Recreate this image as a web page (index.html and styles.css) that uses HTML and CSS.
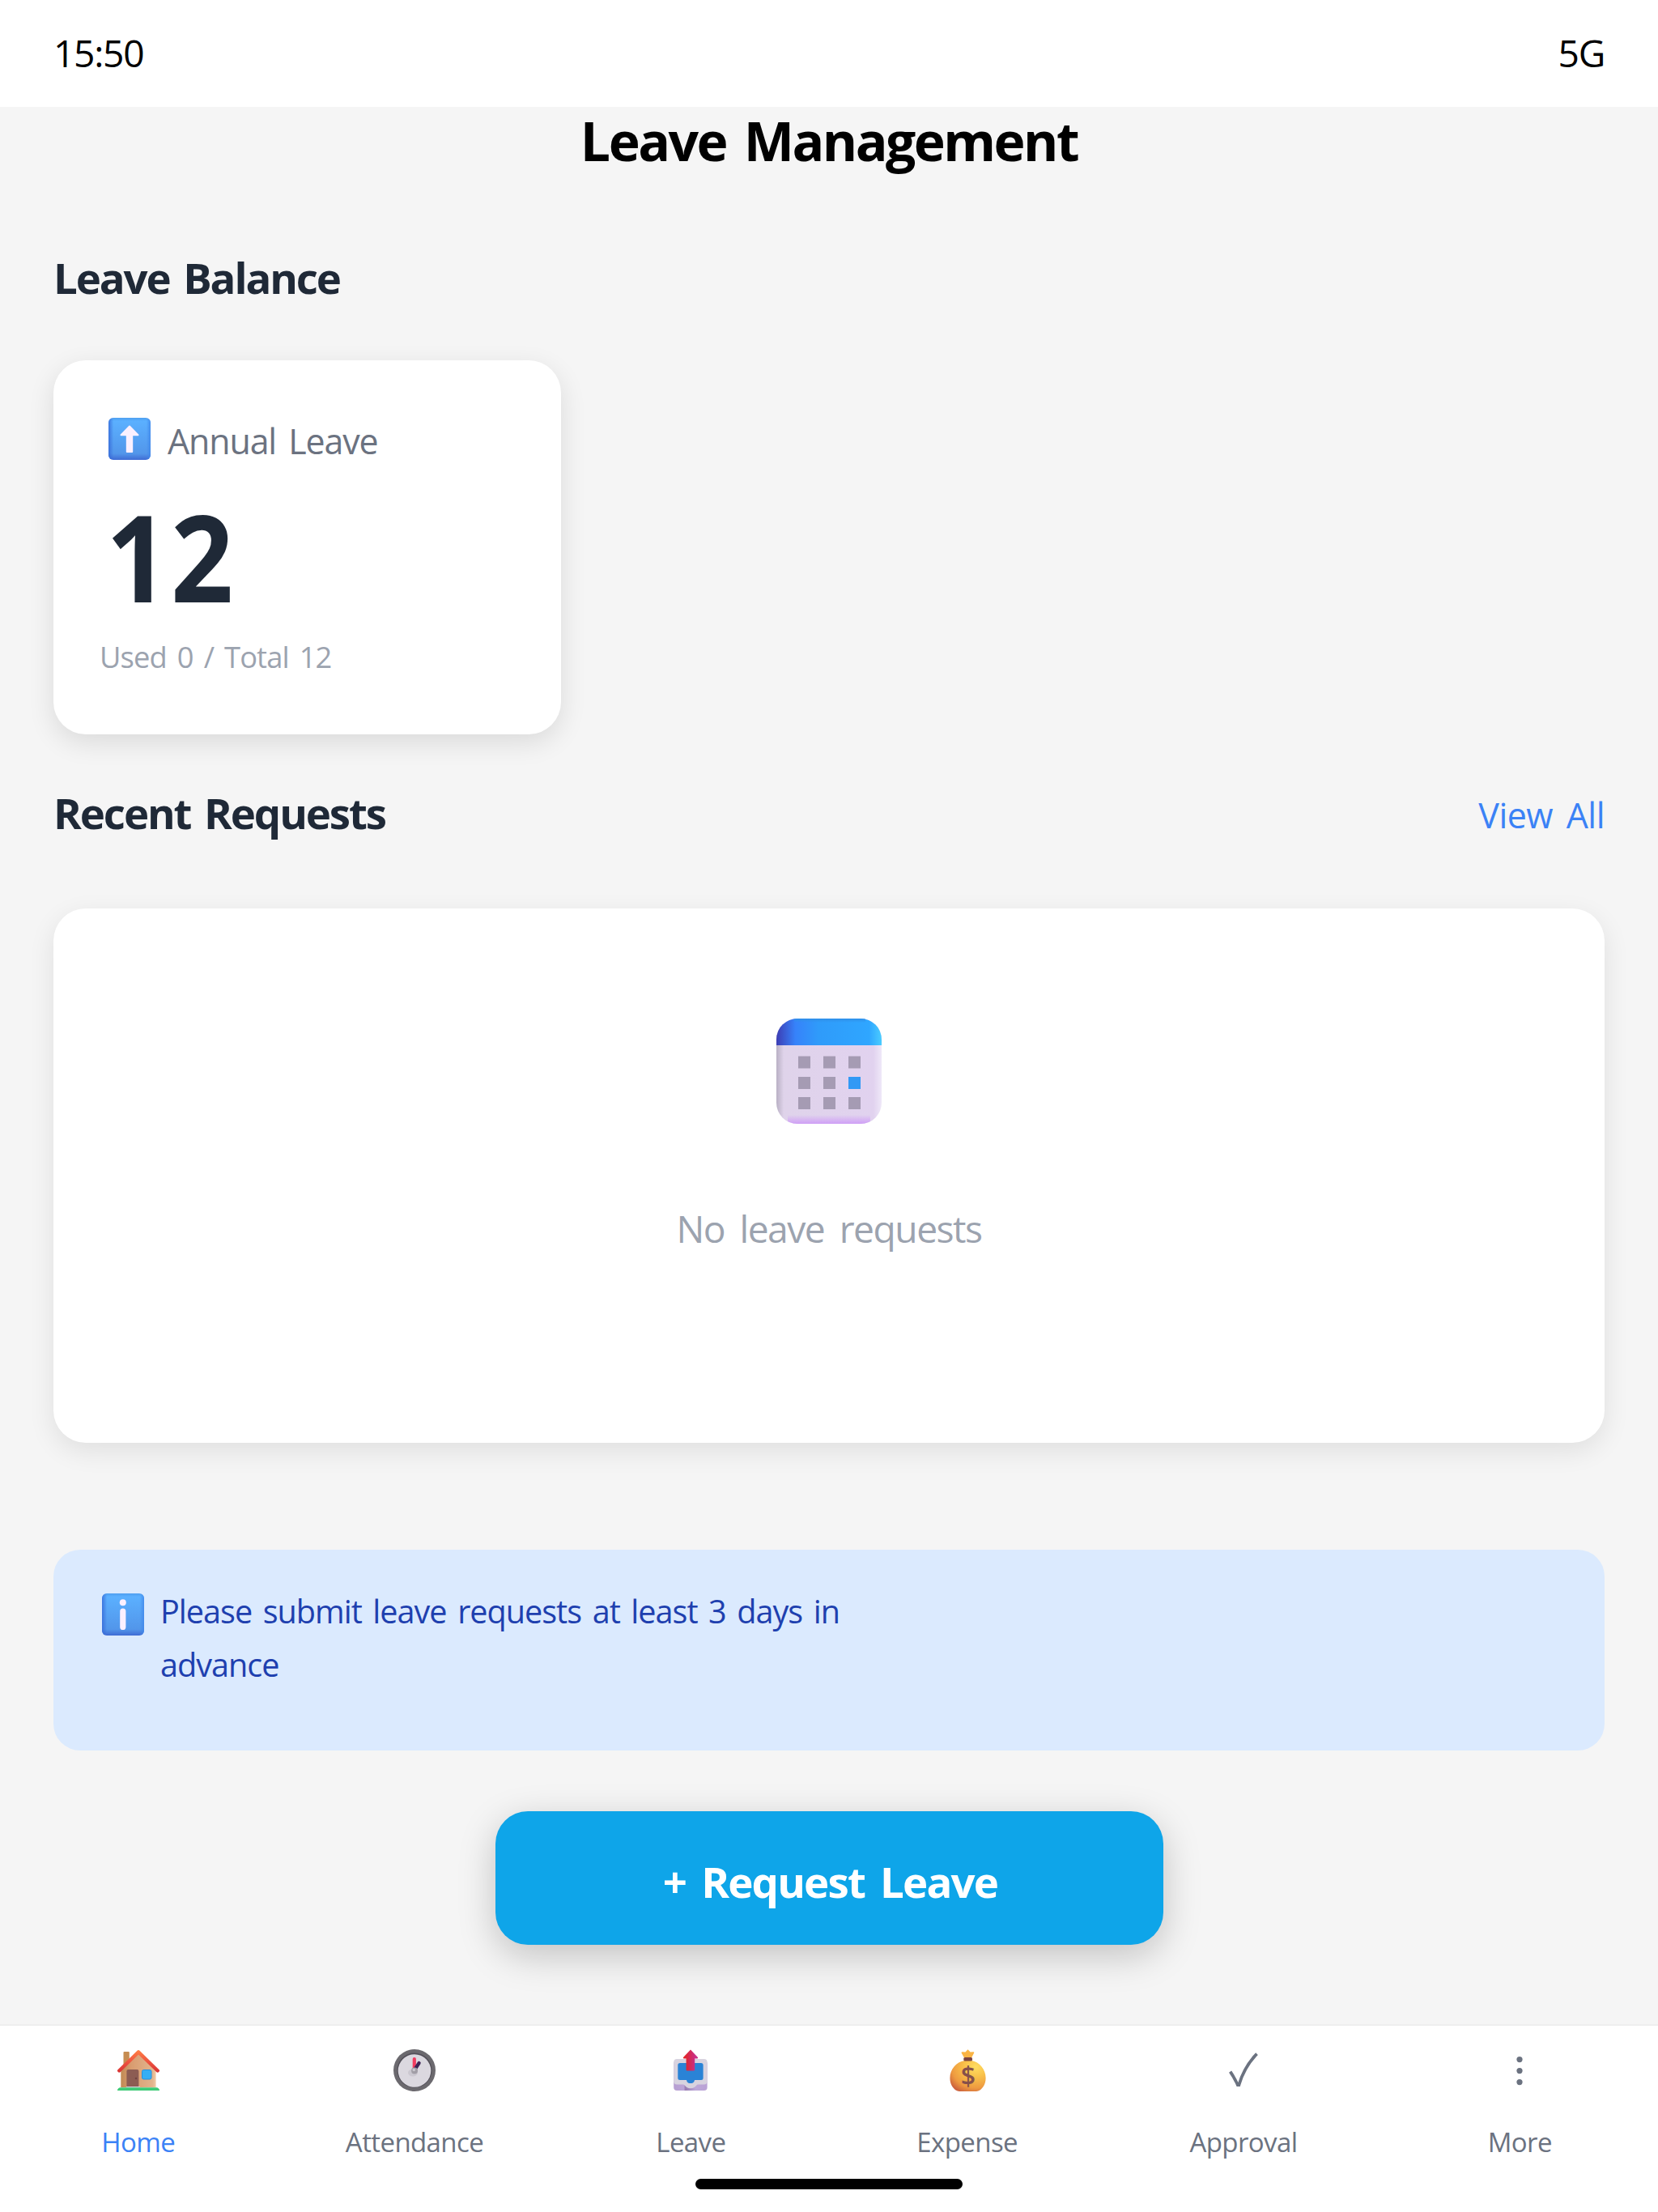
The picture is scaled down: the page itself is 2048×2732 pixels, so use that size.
FILE: index.html
```
<!DOCTYPE html>
<html lang="en">
<head>
    <meta charset="UTF-8">
    <meta name="viewport" content="width=device-width, initial-scale=1.0">
    <title>Leave Management</title>
    <link rel="stylesheet" href="styles.css">
</head>
<body>
    <div class="status-bar">
        <span>15:50</span>
        <span>5G</span>
    </div>

    <main class="content">
        <h1 class="page-title">Leave Management</h1>

        <div class="section-header">
            <h2>Leave Balance</h2>
        </div>
        <div class="card balance-card">
            <div class="balance-type">
                <svg class="icon" viewBox="0 0 52 52">
                    <defs>
                        <linearGradient id="tile" x1="0" y1="0" x2="0" y2="1">
                            <stop offset="0" stop-color="#4e9ff0"/>
                            <stop offset="0.08" stop-color="#5bb0ff"/>
                            <stop offset="0.85" stop-color="#5296ea"/>
                            <stop offset="1" stop-color="#3f6bd4"/>
                        </linearGradient>
                        <linearGradient id="tileSide" x1="0" y1="0" x2="1" y2="0">
                            <stop offset="0" stop-color="#3568d8" stop-opacity="0.8"/>
                            <stop offset="0.12" stop-color="#3568d8" stop-opacity="0"/>
                            <stop offset="0.9" stop-color="#3f86ea" stop-opacity="0"/>
                            <stop offset="1" stop-color="#3f86ea" stop-opacity="0.8"/>
                        </linearGradient>
                    </defs>
                    <rect width="52" height="52" rx="6" fill="url(#tile)"/>
                    <rect width="52" height="52" rx="6" fill="url(#tileSide)"/>
                    <path d="M26 10.5L36.5 21.2H29.2V42H22.8V21.2H15.5Z" fill="#fbf0ff" stroke="#fbf0ff" stroke-width="2" stroke-linejoin="round"/>
                </svg>
                <span>Annual Leave</span>
            </div>
            <div class="balance-days">12</div>
            <div class="balance-detail">Used 0 / Total 12</div>
        </div>

        <div class="section-header recent">
            <h2>Recent Requests</h2>
            <a class="view-all">View All</a>
        </div>
        <div class="card empty-card">
            <svg class="calendar" viewBox="0 0 130 130">
                <defs>
                    <clipPath id="calShape"><rect width="130" height="130" rx="26"/></clipPath>
                    <linearGradient id="calTop" x1="0" y1="0" x2="1" y2="0">
                        <stop offset="0" stop-color="#3d3db4"/>
                        <stop offset="0.18" stop-color="#3682fa"/>
                        <stop offset="0.4" stop-color="#2f9bfa"/>
                        <stop offset="0.88" stop-color="#2fa6ff"/>
                        <stop offset="1" stop-color="#4bccff"/>
                    </linearGradient>
                    <linearGradient id="calBody" x1="0" y1="0" x2="1" y2="0">
                        <stop offset="0" stop-color="#b9b0c4"/>
                        <stop offset="0.07" stop-color="#dfd3ea"/>
                        <stop offset="0.92" stop-color="#e1d2ef"/>
                        <stop offset="1" stop-color="#efe8f8"/>
                    </linearGradient>
                    <linearGradient id="calFoot" x1="0" y1="0" x2="0" y2="1">
                        <stop offset="0" stop-color="#cf9ff6" stop-opacity="0"/>
                        <stop offset="1" stop-color="#cf9ff6"/>
                    </linearGradient>
                    <linearGradient id="calShade" x1="0" y1="0" x2="0" y2="1">
                        <stop offset="0" stop-color="#2f8fe8"/>
                        <stop offset="1" stop-color="#2f8fe8" stop-opacity="0"/>
                    </linearGradient>
                </defs>
                <g clip-path="url(#calShape)">
                    <rect width="130" height="130" fill="url(#calBody)"/>
                    <rect x="14" y="119" width="102" height="11" fill="url(#calFoot)"/>
                    <rect width="130" height="33" fill="url(#calTop)"/>
                    <rect x="22" width="88" height="5" fill="url(#calShade)"/>
                </g>
                <g fill="#a59bb3">
                    <rect x="27" y="46.5" width="15" height="15"/>
                    <rect x="58" y="46.5" width="15" height="15"/>
                    <rect x="89" y="46.5" width="15" height="15"/>
                    <rect x="27" y="72" width="15" height="15"/>
                    <rect x="58" y="72" width="15" height="15"/>
                    <rect x="89" y="72" width="15" height="15" fill="#3199f5"/>
                    <rect x="27" y="97" width="15" height="15"/>
                    <rect x="58" y="97" width="15" height="15"/>
                    <rect x="89" y="97" width="15" height="15"/>
                </g>
            </svg>
            <p class="empty-text">No leave requests</p>
        </div>

        <div class="notice">
            <svg class="icon" viewBox="0 0 52 52">
                <rect width="52" height="52" rx="6" fill="url(#tile)"/>
                <rect width="52" height="52" rx="6" fill="url(#tileSide)"/>
                <circle cx="25.8" cy="11.2" r="4" fill="#fbf0ff"/>
                <rect x="22.2" y="18.5" width="7.2" height="26.5" rx="3.6" fill="#fbf0ff"/>
            </svg>
            <p class="notice-text">Please submit leave requests at least 3 days in advance</p>
        </div>

        <button class="request-btn">+ Request Leave</button>
    </main>

    <nav class="tab-bar">
        <div class="tab active">
            <svg class="icon" viewBox="0 0 52 52">
                <defs>
                    <linearGradient id="wall" x1="0" y1="0" x2="1" y2="0">
                        <stop offset="0" stop-color="#c08a54"/>
                        <stop offset="0.3" stop-color="#d99c70"/>
                        <stop offset="0.9" stop-color="#e2b48c"/>
                        <stop offset="1" stop-color="#f0c9a4"/>
                    </linearGradient>
                    <linearGradient id="roof" gradientUnits="userSpaceOnUse" x1="0" y1="2" x2="0" y2="28">
                        <stop offset="0" stop-color="#ff7d45"/>
                        <stop offset="0.5" stop-color="#ee5540"/>
                        <stop offset="1" stop-color="#d93434"/>
                    </linearGradient>
                </defs>
                <rect x="7.5" y="3" width="7.3" height="20" rx="1" fill="#c68d52"/>
                <path d="M4.3 47V25L26 5L47.6 25V47Z" fill="url(#wall)"/>
                <rect x="11.4" y="25" width="15" height="22" rx="2" fill="#8c5c53"/>
                <circle cx="23" cy="36" r="1.2" fill="#6f4440"/>
                <rect x="11" y="46" width="17" height="2" fill="#d3cfd6"/>
                <rect x="30.5" y="25.5" width="11.5" height="11.5" rx="2" fill="#36aef5" stroke="#2590e0"/>
                <path d="M2.3 26.5L26 3.4L49.7 26.5" fill="none" stroke="url(#roof)" stroke-width="4.4" stroke-linecap="round" stroke-linejoin="round"/>
                <path d="M0 51C0 49 1.5 47.2 4 47.2H48C50.5 47.2 52 49 52 51Z" fill="#3ecb76"/>
            </svg>
            <span>Home</span>
        </div>
        <div class="tab">
            <svg class="icon" viewBox="0 0 52 52">
                <circle cx="26" cy="26" r="26" fill="#6b696e"/>
                <circle cx="26" cy="26" r="21.5" fill="#524f58"/>
                <circle cx="26" cy="26.5" r="20.3" fill="#dbd8df"/>
                <ellipse cx="24" cy="29" rx="6" ry="4.5" fill="#cbc8d0"/>
                <path d="M25.8 12V24" stroke="#f23b5f" stroke-width="4.2" stroke-linecap="round"/>
                <path d="M27 24L31.6 17" stroke="#3c2455" stroke-width="4.2" stroke-linecap="round"/>
                <circle cx="26" cy="26.5" r="4" fill="#a19ea6"/>
                <circle cx="25.3" cy="25.5" r="1.8" fill="#c9c7cd"/>
            </svg>
            <span>Attendance</span>
        </div>
        <div class="tab">
            <svg class="icon" viewBox="0 0 52 52">
                <defs>
                    <linearGradient id="arrow" x1="0" y1="0" x2="1" y2="0">
                        <stop offset="0.15" stop-color="#e0242c"/>
                        <stop offset="0.8" stop-color="#c92f86"/>
                    </linearGradient>
                    <linearGradient id="tray" x1="0" y1="0" x2="1" y2="0">
                        <stop offset="0" stop-color="#b79fd2"/>
                        <stop offset="0.3" stop-color="#bba4d6"/>
                        <stop offset="0.35" stop-color="#967ab0"/>
                        <stop offset="0.65" stop-color="#bda8d8"/>
                        <stop offset="1" stop-color="#baa2d6"/>
                    </linearGradient>
                </defs>
                <rect x="5.2" y="14" width="41.4" height="37" rx="4" fill="url(#tray)"/>
                <path d="M9.2 12H42.6Q46.6 12 46.6 16V39.5Q46.6 43.5 42.6 43.5H35C33 43.5 32.5 48.2 26 48.2C19.8 48.2 19 43.5 17 43.5H9.2Q5.2 43.5 5.2 39.5V16Q5.2 12 9.2 12Z" fill="#d8d3df"/>
                <path d="M13 17H39Q41.6 17 41.6 19.6V35.5Q41.6 38 39 38H31C30.5 40 30 42 26 42C22 42 21.5 40 21 38H13Q10.3 38 10.3 35.5V19.6Q10.3 17 13 17Z" fill="#2a83d6"/>
                <path d="M26 0.5L35.2 10.2Q35.2 11.6 34 11.6H31.2V25.5Q31.2 26.6 30 26.6H21.8Q20.6 26.6 20.6 25.5V11.6H18Q16.8 11.6 16.8 10.2Z" fill="url(#arrow)"/>
            </svg>
            <span>Leave</span>
        </div>
        <div class="tab">
            <svg class="icon" viewBox="0 0 52 52">
                <defs>
                    <radialGradient id="bag" cx="0.72" cy="0.22" r="0.9">
                        <stop offset="0" stop-color="#ffdd62"/>
                        <stop offset="0.35" stop-color="#f9c24a"/>
                        <stop offset="0.75" stop-color="#ee9a40"/>
                        <stop offset="1" stop-color="#cc603c"/>
                    </radialGradient>
                </defs>
                <path d="M22 10.5L18.6 4.5Q18.5 3 20 3.2L23.4 3.6L26.5 0.3L29.6 3.6L33 3.2Q34.5 3 34.2 4.5L31 10.5Z" fill="#fab444"/>
                <path d="M22.5 14L26.5 13.5L31 14C41 15.5 48.6 25 48.6 35.5C48.6 43 45 48 41 50.8Q39.5 51.9 37 51.9H16Q13.5 51.9 12 50.8C8 48 4.4 43 4.4 35.5C4.4 25 12 15.5 22.5 14Z" fill="url(#bag)"/>
                <rect x="21.3" y="10" width="10.7" height="4.6" rx="1.5" fill="#7c4540"/>
                <text class="dollar" x="26.5" y="45" text-anchor="middle">$</text>
            </svg>
            <span>Expense</span>
        </div>
        <div class="tab">
            <svg class="icon" viewBox="0 0 52 52">
                <path d="M9.6 27.7Q15 35.5 18.8 44H20.4Q27 21.5 42.5 5.7" fill="none" stroke="#6b7280" stroke-width="3.8"/>
            </svg>
            <span>Approval</span>
        </div>
        <div class="tab">
            <svg class="icon" viewBox="0 0 52 52" fill="#6b7280">
                <circle cx="26" cy="12.6" r="3.6"/>
                <circle cx="26" cy="26.6" r="3.6"/>
                <circle cx="26" cy="40.6" r="3.6"/>
            </svg>
            <span>More</span>
        </div>
        <div class="home-indicator"></div>
    </nav>
</body>
</html>
```
FILE: styles.css
```
* {
    box-sizing: border-box;
}
body {
    margin: 0;
    height: 2732px;
    display: flex;
    flex-direction: column;
    background-color: #f5f5f5;
    font-family: "Open Sans", "Noto Sans", sans-serif;
    color: #000000;
}
h1, h2, p {
    margin: 0;
}
.icon {
    display: block;
    flex: none;
    width: 52px;
    height: 52px;
}

/* Status bar */
.status-bar {
    display: flex;
    justify-content: space-between;
    align-items: center;
    height: 132px;
    padding: 0 66px 2px;
    background-color: #ffffff;
    font-size: 46.2px;
    letter-spacing: -1.3px;
}

/* Content */
.content {
    flex: 1;
    padding: 0 66px;
}
.page-title {
    font-size: 66px;
    font-weight: 700;
    line-height: 82px;
    letter-spacing: -2.5px;
    word-spacing: 7px;
    text-align: center;
}
.section-header {
    display: flex;
    justify-content: space-between;
    margin: 89px 0 62px;
}
.section-header.recent {
    margin: 57px 0 78px;
}
.section-header h2 {
    font-size: 52.8px;
    font-weight: 700;
    line-height: 80px;
    letter-spacing: -2.1px;
    word-spacing: 5px;
    color: #1f2937;
}
.view-all {
    height: 80px;
    font-size: 42.9px;
    line-height: 86px;
    letter-spacing: -0.5px;
    word-spacing: 6px;
    color: #3b82f6;
}
.card {
    background-color: #ffffff;
    border-radius: 40px;
}
.balance-card {
    width: 627px;
    height: 462px;
    padding: 68px 57px;
    box-shadow: 0 10px 33px rgba(0, 0, 0, 0.11);
}
.balance-type {
    display: flex;
    gap: 21px;
    height: 60px;
    margin-left: 11px;
    padding-top: 3px;
    font-size: 42.9px;
    line-height: 57px;
    letter-spacing: -1.1px;
    word-spacing: 5px;
    color: #6b7280;
}
.balance-days {
    margin: 39px 0 24px 8px;
    font-size: 148.5px;
    font-weight: 700;
    line-height: 150px;
    letter-spacing: 3px;
    transform: scaleX(0.91);
    transform-origin: left;
    color: #1f2937;
}
.balance-detail {
    font-size: 36.3px;
    line-height: 50px;
    letter-spacing: -0.9px;
    word-spacing: 4.5px;
    color: #9ca3af;
}
.empty-card {
    display: flex;
    flex-direction: column;
    align-items: center;
    gap: 100px;
    height: 660px;
    padding-top: 136px;
    box-shadow: 0 10px 33px rgba(0, 0, 0, 0.09);
}
.calendar {
    display: block;
    width: 130px;
    height: 130px;
}
.empty-text {
    font-size: 46.2px;
    line-height: 60px;
    letter-spacing: -1.5px;
    word-spacing: 8px;
    color: #9ca3af;
}
.notice {
    display: flex;
    gap: 20px;
    height: 248px;
    margin-top: 132px;
    padding: 43px 60px;
    border-radius: 33px;
    background-color: #dbeafe;
}
.notice .icon {
    margin-top: 11px;
}
.notice-text {
    width: 900px;
    font-size: 39.6px;
    line-height: 66px;
    letter-spacing: -1px;
    word-spacing: 4.3px;
    color: #1e40af;
}
.request-btn {
    display: block;
    width: 825px;
    height: 165px;
    margin: 75px auto 0;
    padding: 8px 0 0 3px;
    border: none;
    border-radius: 40px;
    background-color: #0ea5e9;
    box-shadow: 0 13px 46px rgba(0, 0, 0, 0.21);
    color: #ffffff;
    font-family: inherit;
    font-size: 52.8px;
    font-weight: 700;
    letter-spacing: -1.8px;
    word-spacing: 7px;
}

/* Bottom tabs */
.tab-bar {
    position: relative;
    display: flex;
    height: 232px;
    padding-top: 29px;
    border-top: 2px solid #eeeeee;
    background-color: #ffffff;
}
.tab {
    flex: 1;
    display: flex;
    flex-direction: column;
    align-items: center;
    gap: 41px;
    font-size: 33px;
    line-height: 44px;
    letter-spacing: -0.6px;
    color: #6b7280;
}
.tab.active {
    color: #3b82f6;
}
.dollar {
    font-size: 32px;
    font-weight: 600;
    fill: #86504a;
}
.home-indicator {
    position: absolute;
    left: 50%;
    bottom: 28px;
    width: 330px;
    height: 13px;
    margin-left: -165px;
    border-radius: 7px;
    background-color: #000000;
}
```
